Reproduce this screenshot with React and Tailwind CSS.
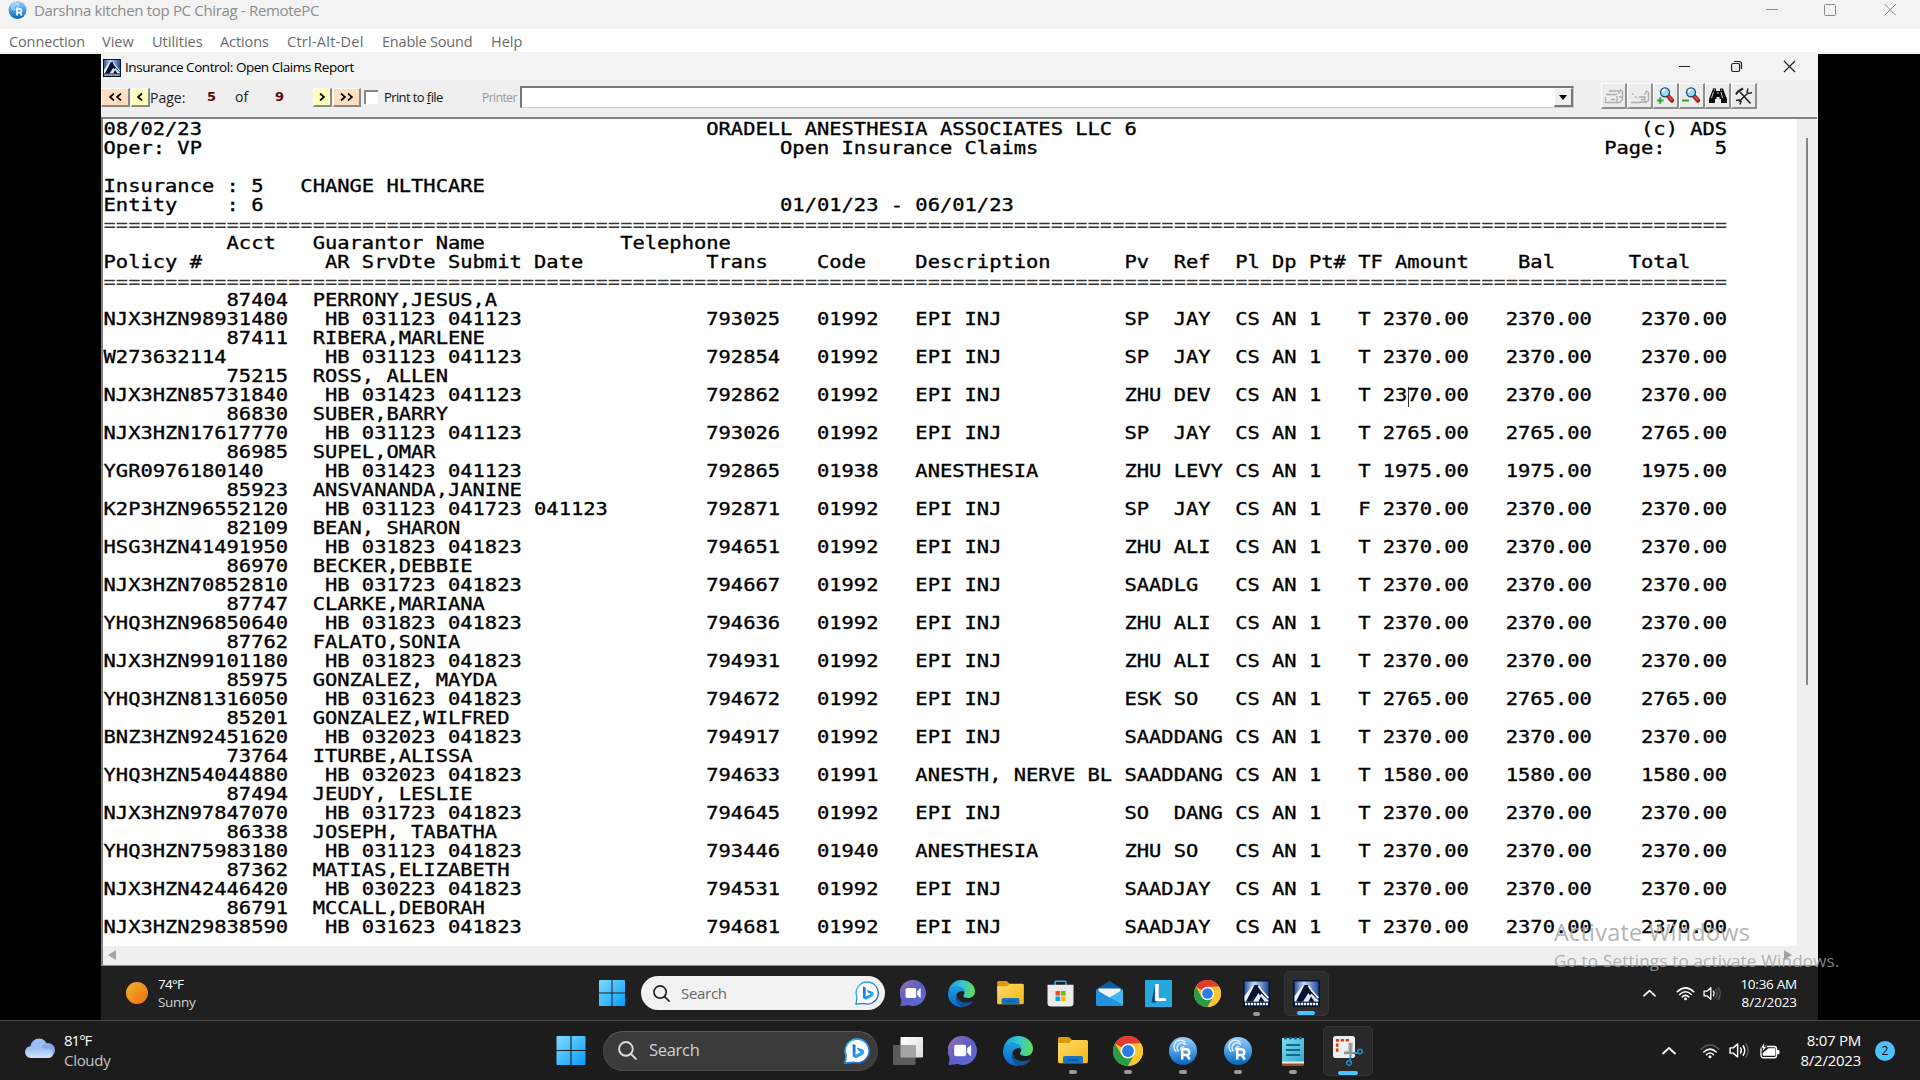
import React from "react";

const line = (...parts) => {
  let s = "";
  parts.forEach(([col, text]) => {
    s = s.padEnd(col, " ") + text;
  });
  return s;
};

const RULE = "=".repeat(132);

const claims = [
  ["87404", "PERRONY,JESUS,A", "NJX3HZN98931480", "031123", "041123", "", "793025", "01992", "EPI INJ", "SP", "JAY", "T", "2370.00"],
  ["87411", "RIBERA,MARLENE", "W273632114", "031123", "041123", "", "792854", "01992", "EPI INJ", "SP", "JAY", "T", "2370.00"],
  ["75215", "ROSS, ALLEN", "NJX3HZN85731840", "031423", "041123", "", "792862", "01992", "EPI INJ", "ZHU", "DEV", "T", "2370.00"],
  ["86830", "SUBER,BARRY", "NJX3HZN17617770", "031123", "041123", "", "793026", "01992", "EPI INJ", "SP", "JAY", "T", "2765.00"],
  ["86985", "SUPEL,OMAR", "YGR0976180140", "031423", "041123", "", "792865", "01938", "ANESTHESIA", "ZHU", "LEVY", "T", "1975.00"],
  ["85923", "ANSVANANDA,JANINE", "K2P3HZN96552120", "031123", "041723", "041123", "792871", "01992", "EPI INJ", "SP", "JAY", "F", "2370.00"],
  ["82109", "BEAN, SHARON", "HSG3HZN41491950", "031823", "041823", "", "794651", "01992", "EPI INJ", "ZHU", "ALI", "T", "2370.00"],
  ["86970", "BECKER,DEBBIE", "NJX3HZN70852810", "031723", "041823", "", "794667", "01992", "EPI INJ", "SAAD", "LG", "T", "2370.00"],
  ["87747", "CLARKE,MARIANA", "YHQ3HZN96850640", "031823", "041823", "", "794636", "01992", "EPI INJ", "ZHU", "ALI", "T", "2370.00"],
  ["87762", "FALATO,SONIA", "NJX3HZN99101180", "031823", "041823", "", "794931", "01992", "EPI INJ", "ZHU", "ALI", "T", "2370.00"],
  ["85975", "GONZALEZ, MAYDA", "YHQ3HZN81316050", "031623", "041823", "", "794672", "01992", "EPI INJ", "ESK", "SO", "T", "2765.00"],
  ["85201", "GONZALEZ,WILFRED", "BNZ3HZN92451620", "032023", "041823", "", "794917", "01992", "EPI INJ", "SAAD", "DANG", "T", "2370.00"],
  ["73764", "ITURBE,ALISSA", "YHQ3HZN54044880", "032023", "041823", "", "794633", "01991", "ANESTH, NERVE BL", "SAAD", "DANG", "T", "1580.00"],
  ["87494", "JEUDY, LESLIE", "NJX3HZN97847070", "031723", "041823", "", "794645", "01992", "EPI INJ", "SO", "DANG", "T", "2370.00"],
  ["86338", "JOSEPH, TABATHA", "YHQ3HZN75983180", "031123", "041823", "", "793446", "01940", "ANESTHESIA", "ZHU", "SO", "T", "2370.00"],
  ["87362", "MATIAS,ELIZABETH", "NJX3HZN42446420", "030223", "041823", "", "794531", "01992", "EPI INJ", "SAAD", "JAY", "T", "2370.00"],
  ["86791", "MCCALL,DEBORAH", "NJX3HZN29838590", "031623", "041823", "", "794681", "01992", "EPI INJ", "SAAD", "JAY", "T", "2370.00"],
];

const lines = [
  line([0, "08/02/23"], [49, "ORADELL ANESTHESIA ASSOCIATES LLC 6"], [125, "(c) ADS"]),
  line([0, "Oper: VP"], [55, "Open Insurance Claims"], [122, "Page:"], [131, "5"]),
  "",
  line([0, "Insurance : 5"], [16, "CHANGE HLTHCARE"]),
  line([0, "Entity"], [10, ": 6"], [55, "01/01/23 - 06/01/23"]),
  RULE,
  line([10, "Acct"], [17, "Guarantor Name"], [42, "Telephone"]),
  line([0, "Policy #"], [18, "AR SrvDte Submit Date"], [49, "Trans"], [58, "Code"], [66, "Description"], [83, "Pv"], [87, "Ref"], [92, "Pl"], [95, "Dp"], [98, "Pt#"], [102, "TF"], [105, "Amount"], [115, "Bal"], [124, "Total"]),
  RULE,
  ...claims.flatMap(([acct, name, policy, srv, sub, date, trans, code, desc, pv, ref, tf, amt]) => [
    line([10, acct], [17, name]),
    line([0, policy], [18, "HB"], [21, srv], [28, sub], [35, date], [49, trans], [58, code], [66, desc], [83, pv], [87, ref], [92, "CS"], [95, "AN"], [98, "1"], [102, tf], [104, amt], [114, amt], [125, amt]),
  ]),
];

/* ---------- icons ---------- */

const RemoteLogo = ({ className }) => (
  <svg viewBox="0 0 28 28" className={className}>
    <defs>
      <linearGradient id="rpc" x1="0" y1="0" x2="0" y2="1">
        <stop offset="0" stopColor="#9ccdf8" />
        <stop offset=".5" stopColor="#4a9fe6" />
        <stop offset="1" stopColor="#0463b8" />
      </linearGradient>
    </defs>
    <circle cx="14" cy="14" r="14" fill="url(#rpc)" />
    <g fill="none" stroke="#e6f3ff" strokeWidth="1.3" strokeLinecap="round">
      <path d="M7 14.500A6.300 6.300 0 0 1 16 5" />
      <path d="M9.300 14A4.500 4.500 0 0 1 16.500 7.500" />
      <path d="M11.500 12.500A3 3 0 0 1 15 9.800" />
    </g>
    <path d="M13.200 22.500V12.300h3.700c4.300 0 4.300 5.400 1 5.700L20.800 22.500M13.200 18h4" fill="none" stroke="#fff" strokeWidth="2.500" />
  </svg>
);

const AdsLogo = ({ className }) => (
  <svg viewBox="0 0 27 27" className={className}>
    <defs>
      <linearGradient id="adsky" x1="0" y1="0" x2="1" y2="0">
        <stop offset="0" stopColor="#2d56a0" />
        <stop offset=".4" stopColor="#c5dcf5" />
        <stop offset="1" stopColor="#1f4b98" />
      </linearGradient>
    </defs>
    <rect width="27" height="27" fill="#07122f" />
    <rect x="1.500" y="1.500" width="24" height="20" fill="url(#adsky)" />
    <path d="M1.500 16 9 6l2 1-6 14.500H1.500z" fill="#eef5ff" />
    <path d="M3 21.500 11.500 5h3.500l8.500 13v3.500z" fill="#071236" />
    <path d="M10 21.500 15.500 13l1.500 2.500 1.500-2 7 7v1h-4l-3.500-5-2.500 5z" fill="#dfeafc" />
    <path d="m15.500 6 3.500 5 6.500 7" fill="none" stroke="#fff" strokeWidth="1.600" />
    <path d="M2 24h23" stroke="#e7f1ea" strokeWidth="2.500" strokeDasharray="2.300 .7" />
  </svg>
);

const WinLogo = ({ className }) => (
  <svg viewBox="0 0 26 26" className={className}>
    <defs>
      <linearGradient id="win" x1="0" y1="0" x2="1" y2="1">
        <stop offset="0" stopColor="#7fdcff" />
        <stop offset="1" stopColor="#069bff" />
      </linearGradient>
    </defs>
    <path fill="url(#win)" d="M1 0h11.500v12.500H0V1q0-1 1-1zM13.500 0H25q1 0 1 1v11.500H13.500zM0 13.500h12.500V26H1q-1 0-1-1zM13.500 13.500H26V25q0 1-1 1H13.500z" />
  </svg>
);

const BingLogo = ({ className, filled }) => (
  <svg viewBox="0 0 24 24" className={className}>
    <defs>
      <linearGradient id="bing" x1="0" y1="0" x2="1" y2="1">
        <stop offset="0" stopColor="#2fc4f5" />
        <stop offset="1" stopColor="#1c55c8" />
      </linearGradient>
      <linearGradient id="bingb" x1="0" y1="0" x2="1" y2="1">
        <stop offset="0" stopColor="#1b5fe0" />
        <stop offset="1" stopColor="#35c3f2" />
      </linearGradient>
    </defs>
    <path d="M12.200 1a11 11 0 1 1-3.500 21.400L1 23.200l1-7A11 11 0 0 1 12.200 1z" fill="#fff" stroke="url(#bing)" strokeWidth={filled ? 1.6 : 1.3} />
    <path d="M8 5.500l2.700 1v9l5-2.600-2.500-1.200-1.300-3 5.500 2q1.300.6 1.300 2.200 0 1.800-1.500 2.700L11 18.800 8 17z" fill="url(#bingb)" />
  </svg>
);

const ChatLogo = ({ className }) => (
  <svg viewBox="0 0 28 28" className={className}>
    <defs>
      <linearGradient id="chat" x1="0" y1="0" x2="1" y2="1">
        <stop offset="0" stopColor="#9a6fae" />
        <stop offset=".5" stopColor="#5b5fc7" />
        <stop offset="1" stopColor="#6170d8" />
      </linearGradient>
    </defs>
    <path d="M14 0a14 14 0 1 1-5.500 26.900Q7 27.700 1.500 28q-1.700 0-.9-1.600 1-2.200.8-5.600A14 14 0 0 1 14 0z" fill="url(#chat)" />
    <rect x="6" y="8.500" width="11.500" height="11" rx="1.800" fill="#fff" />
    <path d="M18.500 12l3-3q.8-.5.8.5v9q0 1-.8.5l-3-3z" fill="#fff" />
  </svg>
);

const EdgeLogo = ({ className }) => (
  <svg viewBox="0 0 30 30" className={className}>
    <defs>
      <linearGradient id="edgea" x1="0" y1=".3" x2="1" y2=".4">
        <stop offset="0" stopColor="#1b9de2" />
        <stop offset=".5" stopColor="#35c5d4" />
        <stop offset="1" stopColor="#62dc5a" />
      </linearGradient>
      <linearGradient id="edgeb" x1="0" y1="0" x2="0" y2="1">
        <stop offset="0" stopColor="#1c9fe5" />
        <stop offset="1" stopColor="#0a66c2" />
      </linearGradient>
    </defs>
    <path d="M.3 13.500C1.500 5 7.500 0 15 0c8.500 0 15 6 15 12.500 0 5-3.500 7.500-7.500 7.500-3 0-5.500-1-5.500-2.500 0-1 1.400-1.500 1.400-4C18.400 10 14.500 7.500 10 7.500 5 7.500 1.500 10 .3 13.500z" fill="url(#edgea)" />
    <path d="M0 15.500C.5 10 4.500 7.500 10 7.500c4.500 0 8.400 2.500 8.400 6-2-2.500-7-1.500-8.900 2.500C7.500 21 11 28.500 17 29.600 8 31.500 0 24.500 0 15.500z" fill="url(#edgeb)" />
    <path d="M10.500 14.500C8.500 20 12.500 25 19 25c4 0 6.500-1 8.500-1.800C25.500 27 21.500 29.500 17 29.600 11 28.500 7 21.500 10.500 14.500z" fill="#10549c" />
  </svg>
);

const FolderLogo = ({ className }) => (
  <svg viewBox="0 0 30 27" className={className}>
    <defs>
      <linearGradient id="fold" x1="0" y1="0" x2="1" y2="1">
        <stop offset="0" stopColor="#ffdb6e" />
        <stop offset="1" stopColor="#f6b70e" />
      </linearGradient>
    </defs>
    <path d="M0 1.500Q0 0 1.500 0H10q1 0 1.800.8L14 3v8H0z" fill="#dd9a0c" />
    <path d="M0 6h11l3-3h14.500Q30 3 30 4.500v20q0 1.700-1.700 1.700H1.700Q0 26.200 0 24.500z" fill="url(#fold)" />
    <path d="M5 26.200V21q0-2 2-2h16q2 0 2 2v5.200z" fill="#1674c4" />
    <path d="M10 22.800h10" stroke="#0b4a86" strokeWidth="1.300" strokeLinecap="round" />
  </svg>
);

const StoreLogo = ({ className }) => (
  <svg viewBox="0 0 27 27" className={className}>
    <path d="M8 6V2.200Q8 1.200 9 1.200h9q1 0 1 1V6" fill="none" stroke="#2cb2e8" strokeWidth="1.500" />
    <path d="M.5 4.800h26V23q0 3.500-3.500 3.500H4Q.5 26.500.5 23z" fill="#ececec" />
    <path fill="#f25022" d="M8.500 11h4.600v4.600H8.500z" />
    <path fill="#7fba00" d="M14 11h4.600v4.600H14z" />
    <path fill="#00a4ef" d="M8.500 16.500h4.600v4.600H8.500z" />
    <path fill="#ffb900" d="M14 16.500h4.600v4.600H14z" />
  </svg>
);

const MailLogo = ({ className }) => (
  <svg viewBox="0 0 27 27" className={className}>
    <path d="M0 9.500 13.500 1 27 9.500V14H0z" fill="#0b5ea8" />
    <path d="M2.500 8.500h22v10h-22z" fill="#f3f1f5" />
    <path d="M0 9.500 13.500 17.500 27 25q0 1-1.500 1H1.500Q0 26 0 24.500z" fill="#2291df" />
    <path d="M27 9.500 13.500 17.500 27 25.500z" fill="#42b9f0" />
    <path d="M13.500 17.500 27 25q0 1-1.500 1H1.500z" fill="#1c95e2" />
  </svg>
);

const LTile = () => (
  <div className="relative flex h-[27px] w-[27px] items-center justify-center bg-[#25a9dc]">
    <svg viewBox="0 0 27 27" className="absolute inset-0 h-full w-full">
      <path d="M10 4.500 6.500 22.500H11z" fill="#0b3f66" />
    </svg>
    <span className="relative ml-[3px] font-['Inter'] text-[23px] leading-none font-bold text-white">L</span>
  </div>
);

const ChromeLogo = ({ className }) => (
  <svg viewBox="0 0 30 30" className={className}>
    <circle cx="15" cy="15" r="15" fill="#fbc02d" />
    <path d="M2 7.500A15 15 0 0 1 28 7.500H15v7.500z" fill="#e33b2e" />
    <path d="M2 7.500A15 15 0 0 0 15 30l6.500-11.200L15 15l-6.500 3.800z" fill="#2a9c48" />
    <path d="M28 7.500A15 15 0 0 1 15 30l6.500-11.200L21.500 7.500z" fill="#fbc62f" />
    <circle cx="15" cy="15" r="7.400" fill="#fff" />
    <circle cx="15" cy="15" r="5.900" fill="#2b7de9" />
  </svg>
);

const TaskViewLogo = ({ className }) => (
  <svg viewBox="0 0 30 28" className={className}>
    <defs>
      <linearGradient id="tv" x1="0" y1="0" x2="1" y2="1">
        <stop offset="0" stopColor="#fff" />
        <stop offset="1" stopColor="#dcdcdc" />
      </linearGradient>
    </defs>
    <rect x="7.500" y="0" width="22.500" height="20.500" rx="1" fill="url(#tv)" />
    <rect x="0" y="8" width="22.500" height="20" rx="1" fill="#5c5c5c" />
    <path d="M7.500 8h14q1 0 1 1v11.500h-14q-1 0-1-1z" fill="#a5a5a5" />
  </svg>
);

const NotepadLogo = ({ className }) => (
  <svg viewBox="0 0 22 30" className={className}>
    <defs>
      <linearGradient id="note" x1="0" y1="0" x2="1" y2="1">
        <stop offset="0" stopColor="#7fdcec" />
        <stop offset="1" stopColor="#35a9cf" />
      </linearGradient>
    </defs>
    <path d="M0 25h22v3.500q0 1.500-1.500 1.500h-19Q0 30 0 28.500z" fill="#a3501d" />
    <path d="M0 3q0-1 1-1h20q1 0 1 1v24.500H0z" fill="#ececec" />
    <path d="M0 3q0-1 1-1h20q1 0 1 1v22.500H0z" fill="url(#note)" />
    <g fill="#0d5f80">
      <circle cx="3.500" cy="2" r="1.600" /><circle cx="8.500" cy="2" r="1.600" /><circle cx="13.500" cy="2" r="1.600" /><circle cx="18.500" cy="2" r="1.600" />
    </g>
    <path d="M4 9h14M4 14h14M4 19h14" stroke="#0d6a8c" strokeWidth="1.800" />
  </svg>
);

const SnipLogo = ({ className }) => (
  <svg viewBox="0 0 30 30" className={className}>
    <rect width="22" height="22" rx="2.500" fill="#eeeeee" />
    <path d="M16 4.200H4.200V16" fill="none" stroke="#d5400f" strokeWidth="2.600" strokeDasharray="3.400 1.600" />
    <path d="M11.500 15.500h4.500V7.500h3v9.500h3" fill="none" stroke="#b9bcbf" strokeWidth="1.600" />
    <path d="M11 17.200 24 17M17.500 7v13" stroke="#8d9296" strokeWidth="2.200" />
    <circle cx="27" cy="15.500" r="2.300" fill="none" stroke="#1e8fd0" strokeWidth="1.500" />
    <circle cx="16" cy="27" r="2.300" fill="none" stroke="#1e8fd0" strokeWidth="1.500" />
    <path d="m17.500 20-.8 4.700M20.500 17.500l4.400-.9" stroke="#1e8fd0" strokeWidth="1.700" />
  </svg>
);

const SearchGlyph = ({ className }) => (
  <svg viewBox="0 0 18 18" fill="none" stroke="currentColor" strokeWidth="1.800" strokeLinecap="round" className={className}>
    <circle cx="7.500" cy="7.500" r="6.500" />
    <path d="m12.300 12.300 4.700 4.700" />
  </svg>
);

const Chevron = ({ className }) => (
  <svg viewBox="0 0 14 8" fill="none" stroke="#fff" strokeWidth="1.800" strokeLinecap="round" strokeLinejoin="round" className={className}>
    <path d="m1 7 6-5.500L13 7" />
  </svg>
);

const Wifi = ({ className, dim }) => (
  <svg viewBox="0 0 20 16" fill="none" stroke="#fff" strokeWidth="1.600" strokeLinecap="round" className={className}>
    <path d="M1.200 6.200q8.800-8.400 17.600 0" stroke={dim ? "#5a5a5a" : "#fff"} />
    <path d="M3.800 9q6.200-5.800 12.400 0M6.500 11.600q3.500-3.200 7 0" />
    <circle cx="10" cy="13.800" r="1.500" fill="#fff" stroke="none" />
  </svg>
);

const Volume = ({ className, low }) => (
  <svg viewBox="0 0 20 16" fill="none" stroke="#fff" strokeWidth="1.400" strokeLinecap="round" strokeLinejoin="round" className={className}>
    <path d="M1 5.500h3l4.200-3.700v12.400L4 10.500H1z" />
    <path d="M11 5.500q1.600 2.500 0 5" />
    <path d="M13.500 3.500q3 4.500 0 9" stroke={low ? "#5a5a5a" : "#fff"} />
    <path d="M16 1.500q4.500 6.500 0 13" stroke="#5a5a5a" />
  </svg>
);

const Battery = ({ className }) => (
  <svg viewBox="0 0 20 17" className={className}>
    <rect x="1" y="4.500" width="15.500" height="11.200" rx="2.200" fill="none" stroke="#fff" strokeWidth="1.400" />
    <path d="M17 8h1.500q1 0 1 1v2.200q0 1-1 1H17z" fill="#fff" />
    <path d="M8.500 6.200h6q.8 0 .8.800v6q0 .8-.8.800h-11q-.8 0-.8-.8v-2z" fill="#fff" />
    <path d="M4.500 0 .5 6h2.300L2 10.500 6.800 4.500H4.300z" fill="#fff" stroke="#1c1c1c" strokeWidth=".8" />
  </svg>
);

const PrinterGlyph = ({ second }) => (
  <svg viewBox="0 0 22 20" className="h-[20px] w-[22px]" fill="none" stroke="#adadad" strokeWidth="1.300">
    {second ? (
      <path d="M3 8h1.500M6 10.500l2.500 1.500M10 11h6v5h-5M12 13.500h3M15.500 9l2-4 2 1.500v8l-3 2.500M2 16.500h10" />
    ) : (
      <path d="M6 5h10M3 8.500h11M2.500 11v5.500H14V10M8 13.500h4M15.500 8l2-4 2 1.500v8l-3 3H14M16 11h3" />
    )}
  </svg>
);

const Magnifier = ({ plus }) => (
  <svg viewBox="0 0 22 20" className="h-[20px] w-[22px]">
    <path d="m13.500 10.500 3.500 4" stroke="#8c2015" strokeWidth="4.300" strokeLinecap="round" />
    <path d="m13.500 10.300 3 3" stroke="#ee3b26" strokeWidth="2.400" strokeLinecap="round" />
    <circle cx="10" cy="6.300" r="4.500" fill="#8fdcf4" stroke="#20406f" strokeWidth="1.300" />
    <path d="M7.500 6q.5-2.500 3-2.500" stroke="#fff" strokeWidth="1.800" fill="none" />
    <path d={plus ? "M2 14.500h6.500M5.200 11.300v6.500" : "M1 14.500h7"} stroke="#35a821" strokeWidth="2" />
  </svg>
);

const Binoculars = () => (
  <svg viewBox="0 0 20 18" className="h-[18px] w-[20px]">
    <path d="M5 1.500h3V4h4V1.500h3l1 3 3 7.500v4h-6v-4h-1.500V10h-3v2H7v4H1v-4l3-7.500z" fill="#0a0a0a" />
    <path d="M5.500 5 3.500 11M13 5l1.500 6M6 3h1M13 3h1" stroke="#ddd" strokeWidth=".9" />
    <path d="M9.500 6h1" stroke="#fff" strokeWidth="1.500" />
  </svg>
);

const Tools = () => (
  <svg viewBox="0 0 18 18" className="h-[18px] w-[18px]" fill="none" stroke="#262626" strokeWidth="1.700">
    <path d="M5 5 15.500 16.500" />
    <path d="M1 7.500 3 4.500 8 1.500" strokeWidth="2.200" />
    <path d="M12.500 6.500 4 14.500" />
    <path d="M13 1.500 12 5l1.500 1.500 3.500-1M1 13.500l3.500-.5L6 14.500 5 17.500" strokeWidth="1.500" />
  </svg>
);

/* ---------- pieces ---------- */

const PageBtn = ({ children, className }) => (
  <div className={`flex h-[19px] items-center justify-center border-t border-r-2 border-b-2 border-l border-t-white border-r-[#888] border-b-[#888] border-l-white text-black ${className}`}>
    {children}
  </div>
);

const Arrows = ({ double, left }) => (
  <svg viewBox={double ? "0 0 13 8" : "0 0 6 8"} className={`mt-[1px] h-[8px] ${double ? "w-[13px]" : "w-[6px]"} ${left ? "rotate-180" : ""}`} fill="none" stroke="#000" strokeWidth="1.700">
    <path d={double ? "m1 .5 4 3.500-4 3.500M8 .5 12 4 8 7.500" : "m1 .5 4 3.500-4 3.500"} />
  </svg>
);

const ToolBtn = ({ children }) => (
  <div className="flex h-[26px] w-[26px] items-center justify-center border-t border-r-2 border-b-2 border-l border-t-white border-r-[#8e8e8e] border-b-[#8e8e8e] border-l-white bg-[#ececec]">
    {children}
  </div>
);

const menu = [
  ["Connection", "w-[93px] tracking-[-0.12px]"],
  ["View", "w-[50px] tracking-[0px]"],
  ["Utilities", "w-[68px] tracking-[0px]"],
  ["Actions", "w-[67px] tracking-[-0.1px]"],
  ["Ctrl-Alt-Del", "w-[95px] tracking-[0.25px]"],
  ["Enable Sound", "w-[109px] tracking-[-0.2px]"],
  ["Help", "w-[50px]"],
];

const RemoteCell = ({ children, active, mark }) => (
  <div className="flex w-[49.2px] justify-center">
    <div className={`relative flex h-[45px] w-[45px] items-center justify-center rounded-[5px] ${active ? "border border-[#353535] bg-[#2c2c2c]" : ""}`}>
      {children}
      {mark && <span className={`absolute bottom-[0px] h-[4px] rounded-full ${active ? "w-[18px] bg-[#4cc2ff]" : "w-[7px] bg-[#9a9a9a]"}`} />}
    </div>
  </div>
);

const LocalCell = ({ children, active, mark }) => (
  <div className="flex w-[55px] justify-center">
    <div className={`relative flex h-[50px] w-[50px] items-center justify-center rounded-[5px] ${active ? "border border-[#343434] bg-[#292929]" : ""}`}>
      {children}
      {mark && <span className={`absolute h-[4px] rounded-full ${active ? "bottom-[0px] w-[20px] bg-[#4cc2ff]" : "bottom-[2px] w-[8px] bg-[#9a9a9a]"}`} />}
    </div>
  </div>
);

export default function App() {
  return (
    <div className="flex h-[1080px] w-[1920px] flex-col overflow-hidden bg-black font-['Open_Sans','Noto_Sans',sans-serif]">
      {/* RemotePC title bar */}
      <header className="flex h-[29px] shrink-0 items-start justify-between bg-[#f3f3f3] text-[#8c8c8c]">
        <div className="flex items-center pl-[8px]">
          <RemoteLogo className="h-[18px] w-[19px]" />
          <span className="ml-[7px] text-[15px] leading-[20px] tracking-[-0.33px]">Darshna kitchen top PC Chirag - RemotePC</span>
        </div>
        <svg viewBox="0 0 130 20" className="mr-[24px] h-[20px] w-[130px]" fill="none" stroke="#8a8a8a" strokeWidth="1">
          <path d="M0 9.500h12M118.500 4l11.500 11.500M130 4l-11.500 11.500" />
          <rect x="58.500" y="4.500" width="11" height="11" rx="1" />
        </svg>
      </header>

      {/* Menu */}
      <nav className="flex h-[23px] shrink-0 bg-white pl-[9px] text-[14.500px] leading-[25px] text-[#6b6b6b]">
        {menu.map(([label, cls]) => (
          <span key={label} className={`shrink-0 whitespace-nowrap ${cls}`}>{label}</span>
        ))}
      </nav>
      <div className="h-[2px] shrink-0 bg-[#f3f3f3]" />

      {/* Remote desktop */}
      <div className="flex h-[966px] shrink-0 justify-center pr-[1px]">
        <div className="relative flex w-[1717px] flex-col bg-[#efefef]">
          <div className="flex h-[26px] shrink-0 items-start justify-between bg-[#f3f3f3]">
            <div className="flex items-center pl-[2px]">
              <AdsLogo className="mt-[1px] h-[18px] w-[18px]" />
              <span className="ml-[4px] text-[13.500px] leading-[26px] tracking-[-0.45px] text-black">Insurance Control: Open Claims Report</span>
            </div>
            <svg viewBox="0 0 118 26" className="mr-[22px] h-[26px] w-[118px]" fill="none" stroke="#222" strokeWidth="1.200">
              <path d="M1 12.500h11M106 7l11 11M117 7l-11 11" />
              <rect x="53.600" y="9.500" width="8" height="8" rx="1.500" />
              <path d="M56 7.500h5q2.500 0 2.500 2.500v5" />
            </svg>
          </div>

          <div className="flex h-[37px] shrink-0 items-center pb-[3px] text-[13px] text-[#222]">
            <PageBtn className="w-[29px] bg-[#ffdfbf]"><Arrows double left /></PageBtn>
            <PageBtn className="ml-[1px] w-[19px] bg-[#ffffb9]"><Arrows left /></PageBtn>
            <span className="w-[57px] text-[14px]">Page:</span>
            <span className="w-[28px] font-['DejaVu_Sans'] text-[13px] font-bold text-[#5a0c0c]">5</span>
            <span className="w-[40px] pb-[2px] text-[14px]">of</span>
            <span className="w-[38px] font-['DejaVu_Sans'] text-[13px] font-bold text-[#5a0c0c]">9</span>
            <PageBtn className="w-[19px] bg-[#ffffb9]"><Arrows /></PageBtn>
            <PageBtn className="ml-[1px] w-[28px] bg-[#ffdfbf]"><Arrows double /></PageBtn>
            <div className="ml-[3px] h-[14px] w-[14px] border-t-2 border-l-2 border-[#888] bg-white" />
            <span className="ml-[6px] w-[98px] pt-[2px] text-[13px] tracking-[-0.6px] whitespace-nowrap text-[#111]">Print to <u>f</u>ile</span>
            <span className="w-[38px] pt-[1px] text-[12px] tracking-[-0.5px] text-[#999]">Printer</span>
            <div className="flex h-[22px] w-[1054px] justify-end border-t-2 border-r border-b border-l-2 border-t-[#777] border-r-[#ccc] border-b-[#ccc] border-l-[#777] bg-white">
              <div className="flex h-[19px] w-[19px] items-center justify-center border-t border-r-2 border-b-2 border-l border-t-white border-r-[#777] border-b-[#777] border-l-white bg-[#efefef]">
                <svg viewBox="0 0 8 5" className="h-[5px] w-[8px]"><path d="M0 0h8L4 5z" /></svg>
              </div>
            </div>
            <div className="-mt-[2px] ml-[27px] flex">
              <ToolBtn><PrinterGlyph /></ToolBtn>
              <ToolBtn><PrinterGlyph second /></ToolBtn>
              <ToolBtn><Magnifier plus /></ToolBtn>
              <ToolBtn><Magnifier /></ToolBtn>
              <ToolBtn><Binoculars /></ToolBtn>
              <ToolBtn><Tools /></ToolBtn>
            </div>
          </div>

          {/* Report viewport */}
          <div className="mr-[1px] flex h-[848px] shrink-0 flex-col border-t-2 border-l-2 border-[#828282]">
            <div className="flex h-[827px] shrink-0">
              <div className="relative h-full w-[1694px] overflow-hidden rounded-br-[2px] bg-white">
                <pre className="origin-left scale-x-[1.135] pl-[0.5px] font-['DejaVu_Sans_Mono',monospace] text-[18px] leading-[19px] text-black">
                  {lines.map((l, i) => (
                    <div
                      key={i}
                      className={l === RULE ? "h-[19px] pt-[1px] whitespace-pre text-[#333]" : "h-[19px] whitespace-pre [-webkit-text-stroke:0.35px_#000]"}
                    >
                      {l || " "}
                    </div>
                  ))}
                </pre>
                <span className="absolute top-[268px] left-[1305px] h-[20px] w-[1px] bg-[#333]" />
              </div>
              <div className="flex flex-1 pt-[19px] pl-[9px]">
                <div className="h-[547px] w-[2px] bg-[#858585]" />
              </div>
            </div>
            <div className="flex h-[17px] shrink-0 items-center justify-between pr-[25px] pl-[5px]">
              <svg viewBox="0 0 8 10" className="h-[10px] w-[8px]"><path d="M8 0v10L0 5z" fill="#a3a3a3" /></svg>
              <svg viewBox="0 0 8 10" className="h-[10px] w-[8px]"><path d="M0 0v10l8-5z" fill="#a3a3a3" /></svg>
            </div>
          </div>

          {/* Remote taskbar */}
          <div className="relative flex h-[55px] shrink-0 items-center border-t border-[#8b8b8b] bg-[#202020]">
            <div className="flex w-[485px] items-center">
              <div className="ml-[25px] h-[22px] w-[22px] rounded-full bg-gradient-to-br from-[#f0b32c] to-[#ee6c10]" />
              <div className="ml-[10px] pb-[1px] text-[13.500px] leading-[18px] tracking-[-0.3px] text-white">
                <div className="tracking-[-0.7px]">74°F</div>
                <div className="text-[#d0d0d0]">Sunny</div>
              </div>
            </div>
            <div className="flex w-[55px] items-center pl-[13px]"><WinLogo className="h-[26px] w-[26px]" /></div>
            <div className="flex h-[34px] w-[244px] items-center rounded-full bg-[#f2f2f2] pr-[6px] pl-[12px]">
              <SearchGlyph className="h-[17px] w-[17px] text-[#222]" />
              <span className="ml-[11px] flex-1 text-[15px] tracking-[-0.3px] text-[#666]">Search</span>
              <BingLogo className="h-[24px] w-[24px]" />
            </div>
            <div className="ml-[3px] flex">
              <RemoteCell><ChatLogo className="h-[26px] w-[26px]" /></RemoteCell>
              <RemoteCell><EdgeLogo className="h-[27px] w-[27px]" /></RemoteCell>
              <RemoteCell><FolderLogo className="h-[24px] w-[27px]" /></RemoteCell>
              <RemoteCell><StoreLogo className="h-[27px] w-[27px]" /></RemoteCell>
              <RemoteCell><MailLogo className="h-[27px] w-[27px]" /></RemoteCell>
              <RemoteCell><LTile /></RemoteCell>
              <RemoteCell><ChromeLogo className="h-[27px] w-[27px]" /></RemoteCell>
              <RemoteCell mark><AdsLogo className="h-[27px] w-[27px]" /></RemoteCell>
              <RemoteCell mark active><AdsLogo className="h-[27px] w-[27px]" /></RemoteCell>
            </div>
            <div className="ml-auto flex items-center pr-[21px]">
              <Chevron className="h-[8px] w-[13px]" />
              <Wifi className="ml-[20px] h-[15px] w-[19px]" />
              <Volume low className="ml-[8px] h-[15px] w-[19px]" />
              <div className="ml-[17px] w-[58px] text-right text-[13.500px] leading-[18px] whitespace-nowrap text-white">
                <div className="tracking-[-0.25px]">10:36 AM</div>
                <div className="tracking-[-0.1px]">8/2/2023</div>
              </div>
            </div>
          </div>

          {/* Activation watermark */}
          <div className="absolute top-[861px] left-[1453px] whitespace-nowrap text-[#a0a0a0]/80">
            <div className="text-[23.500px] leading-[34px] tracking-[0.2px]">Activate Windows</div>
            <div className="text-[17px] leading-[24px] tracking-[0.2px]">Go to Settings to activate Windows.</div>
          </div>
        </div>
      </div>

      {/* Local taskbar */}
      <footer className="flex h-[60px] shrink-0 items-center border-t border-[#484848] bg-[#1c1c1c]">
        <div className="flex w-[556px] items-center">
          <svg viewBox="0 0 30 20" className="-mt-[5px] ml-[25px] h-[20px] w-[30px]">
            <defs>
              <linearGradient id="cl" x1="0" y1="0" x2="0" y2="1">
                <stop offset="0" stopColor="#8fb4f2" />
                <stop offset="1" stopColor="#d3e3fa" />
              </linearGradient>
            </defs>
            <circle cx="14" cy="9" r="8.500" fill="#9dbdf4" />
            <circle cx="23" cy="12" r="7" fill="#86a9ea" />
            <path d="M6 20a6 6 0 0 1 0-12q4-.5 6.500 3 4-3 8 0Q24 9 27 12.500q3 7.500-4 7.500z" fill="url(#cl)" />
          </svg>
          <div className="ml-[9px] pb-[2px] text-[15px] leading-[20px] tracking-[-0.3px] text-white">
            <div className="tracking-[-1px]">81°F</div>
            <div className="text-[#c4c4c4]">Cloudy</div>
          </div>
        </div>
        <WinLogo className="h-[29px] w-[30px]" />
        <div className="ml-[17px] flex h-[40px] w-[275px] items-center rounded-full border border-[#4a4a4a] border-t-[#5c5c5c] bg-[#3b3b3b] pr-[7px] pl-[14px]">
          <SearchGlyph className="h-[19px] w-[19px] text-[#dcdcdc]" />
          <span className="ml-[12px] flex-1 text-[16.500px] tracking-[-0.3px] text-[#d0d0d0]">Search</span>
          <BingLogo filled className="h-[26px] w-[26px]" />
        </div>
        <div className="ml-[2px] flex">
          <LocalCell><TaskViewLogo className="h-[28px] w-[30px]" /></LocalCell>
          <LocalCell><ChatLogo className="h-[29px] w-[29px]" /></LocalCell>
          <LocalCell><EdgeLogo className="h-[30px] w-[30px]" /></LocalCell>
          <LocalCell mark><FolderLogo className="h-[27px] w-[30px]" /></LocalCell>
          <LocalCell mark><ChromeLogo className="h-[30px] w-[30px]" /></LocalCell>
          <LocalCell mark><RemoteLogo className="h-[28px] w-[28px]" /></LocalCell>
          <LocalCell mark><RemoteLogo className="h-[28px] w-[28px]" /></LocalCell>
          <LocalCell mark><NotepadLogo className="h-[30px] w-[22px]" /></LocalCell>
          <LocalCell mark active><SnipLogo className="h-[30px] w-[30px]" /></LocalCell>
        </div>
        <div className="ml-auto flex items-center pr-[25px]">
          <Chevron className="h-[9px] w-[14px]" />
          <Wifi dim className="ml-[24px] h-[16px] w-[20px]" />
          <Volume className="ml-[9px] h-[17px] w-[21px]" />
          <Battery className="ml-[10px] h-[17px] w-[20px]" />
          <div className="ml-[17px] w-[64px] pb-[2px] text-right text-[15px] leading-[20px] tracking-[-0.25px] whitespace-nowrap text-white">
            <div>8:07 PM</div>
            <div>8/2/2023</div>
          </div>
          <div className="ml-[14px] flex h-[20px] w-[20px] items-center justify-center rounded-full bg-[#4cc2ff] text-[12px] text-black">2</div>
        </div>
      </footer>
    </div>
  );
}
